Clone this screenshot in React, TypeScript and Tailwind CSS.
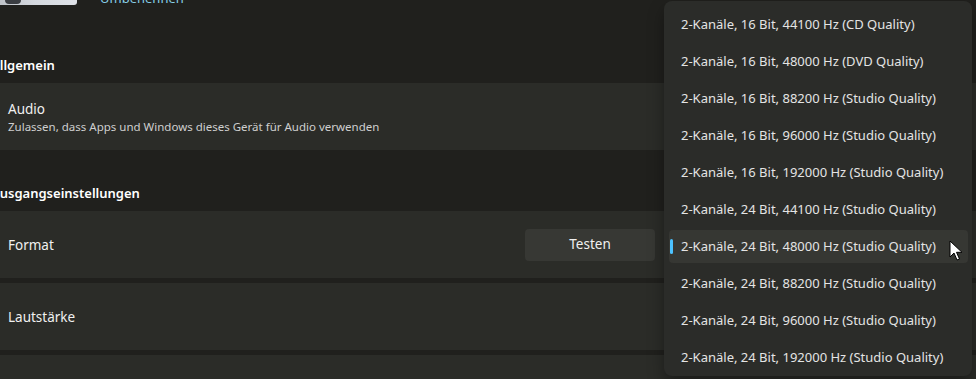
import React from "react";

const items = [
  "2-Kanäle, 16 Bit, 44100 Hz (CD Quality)",
  "2-Kanäle, 16 Bit, 48000 Hz (DVD Quality)",
  "2-Kanäle, 16 Bit, 88200 Hz (Studio Quality)",
  "2-Kanäle, 16 Bit, 96000 Hz (Studio Quality)",
  "2-Kanäle, 16 Bit, 192000 Hz (Studio Quality)",
  "2-Kanäle, 24 Bit, 44100 Hz (Studio Quality)",
  "2-Kanäle, 24 Bit, 48000 Hz (Studio Quality)",
  "2-Kanäle, 24 Bit, 88200 Hz (Studio Quality)",
  "2-Kanäle, 24 Bit, 96000 Hz (Studio Quality)",
  "2-Kanäle, 24 Bit, 192000 Hz (Studio Quality)",
];

export default function App() {
  return (
    <div className="relative w-[976px] h-[379px] overflow-hidden bg-[#20201d] font-['Noto_Sans',sans-serif] text-[#f2f2f2]">
      <div className="ml-[-9px] w-[994px] flex flex-col">
        {/* top row */}
        <div className="h-[5px] flex items-start">
          <div className="w-[86px] h-[5px] rounded-b-[3px] bg-gradient-to-r from-[#b8bcc2] via-[#d4d8de] to-[#dfe2e8] flex items-start">
            <div className="ml-[14px] w-[16px] h-[4px] rounded-b-full bg-[#3a3d42]" />
          </div>
          <div className="ml-[23px] mt-[-12px] text-[13px] leading-[20px] text-[#86cde6]">Umbenennen</div>
        </div>

        {/* Allgemein */}
        <div className="mt-[50px] h-[20px] text-[13px] leading-[20px] font-semibold text-white">Allgemein</div>
        <div className="mt-[8px] h-[67px] bg-[#2b2c28] rounded-[4px] pl-[17px] flex flex-col justify-center">
          <div className="text-[13.5px] leading-[20px] text-[#f0f0f0]">Audio</div>
          <div className="text-[11.5px] leading-[16px] text-[#cfcfcf]">
            Zulassen, dass Apps und Windows dieses Gerät für Audio verwenden
          </div>
        </div>

        {/* Ausgangseinstellungen */}
        <div className="mt-[33px] h-[20px] text-[13px] leading-[20px] font-semibold text-white">Ausgangseinstellungen</div>
        <div className="mt-[8px] h-[67px] bg-[#2b2c28] rounded-[4px] pl-[17px] pr-[20px] flex items-center gap-[10px]">
          <div className="flex-1 text-[13.5px] leading-[20px] text-[#f0f0f0]">Format</div>
          <div className="w-[130px] h-[32px] rounded-[4px] bg-[#373834] flex items-center justify-center text-[13.5px] text-[#f0f0f0]">
            Testen
          </div>
          <div className="w-[300px] h-[32px] rounded-[4px] bg-[#373834]" />
        </div>
        <div className="mt-[5px] h-[67px] bg-[#2b2c28] rounded-[4px] pl-[17px] flex items-center">
          <div className="text-[13.5px] leading-[20px] text-[#f0f0f0]">Lautstärke</div>
        </div>
        <div className="mt-[5px] h-[67px] bg-[#2b2c28] rounded-[4px]" />
      </div>

      {/* dropdown popup */}
      <div className="absolute left-[664px] top-[1px] w-[308px] h-[375px] rounded-[8px] bg-[#2b2c29] shadow-[0_8px_16px_rgba(0,0,0,0.35)] pt-[7px] pl-[5px] pr-[4px] flex flex-col gap-[4px]">
        {items.map((t, i) => (
          <div
            key={t}
            className={
              i === 6
                ? "relative h-[33px] shrink-0 rounded-[4px] bg-[#363733] pl-[12px] flex items-center text-[13px] text-[#e4e4e4] whitespace-nowrap"
                : "relative h-[33px] shrink-0 rounded-[4px] pl-[12px] flex items-center text-[13px] text-[#e4e4e4] whitespace-nowrap"
            }
          >
            {i === 6 && <div className="absolute left-[1px] top-[9px] w-[3px] h-[15px] rounded-full bg-[#4cc2ff]" />}
            {t}
          </div>
        ))}
      </div>

      {/* mouse cursor */}
      <svg className="absolute left-[949px] top-[240px]" width="14" height="22" viewBox="0 0 14 22">
        <path d="M1 1 L1 17 L5 13 L8 20 L10.5 19 L7.5 12.3 L13 12.3 Z" fill="#ffffff" stroke="#000000" strokeWidth="1" strokeLinejoin="miter" />
      </svg>
    </div>
  );
}
